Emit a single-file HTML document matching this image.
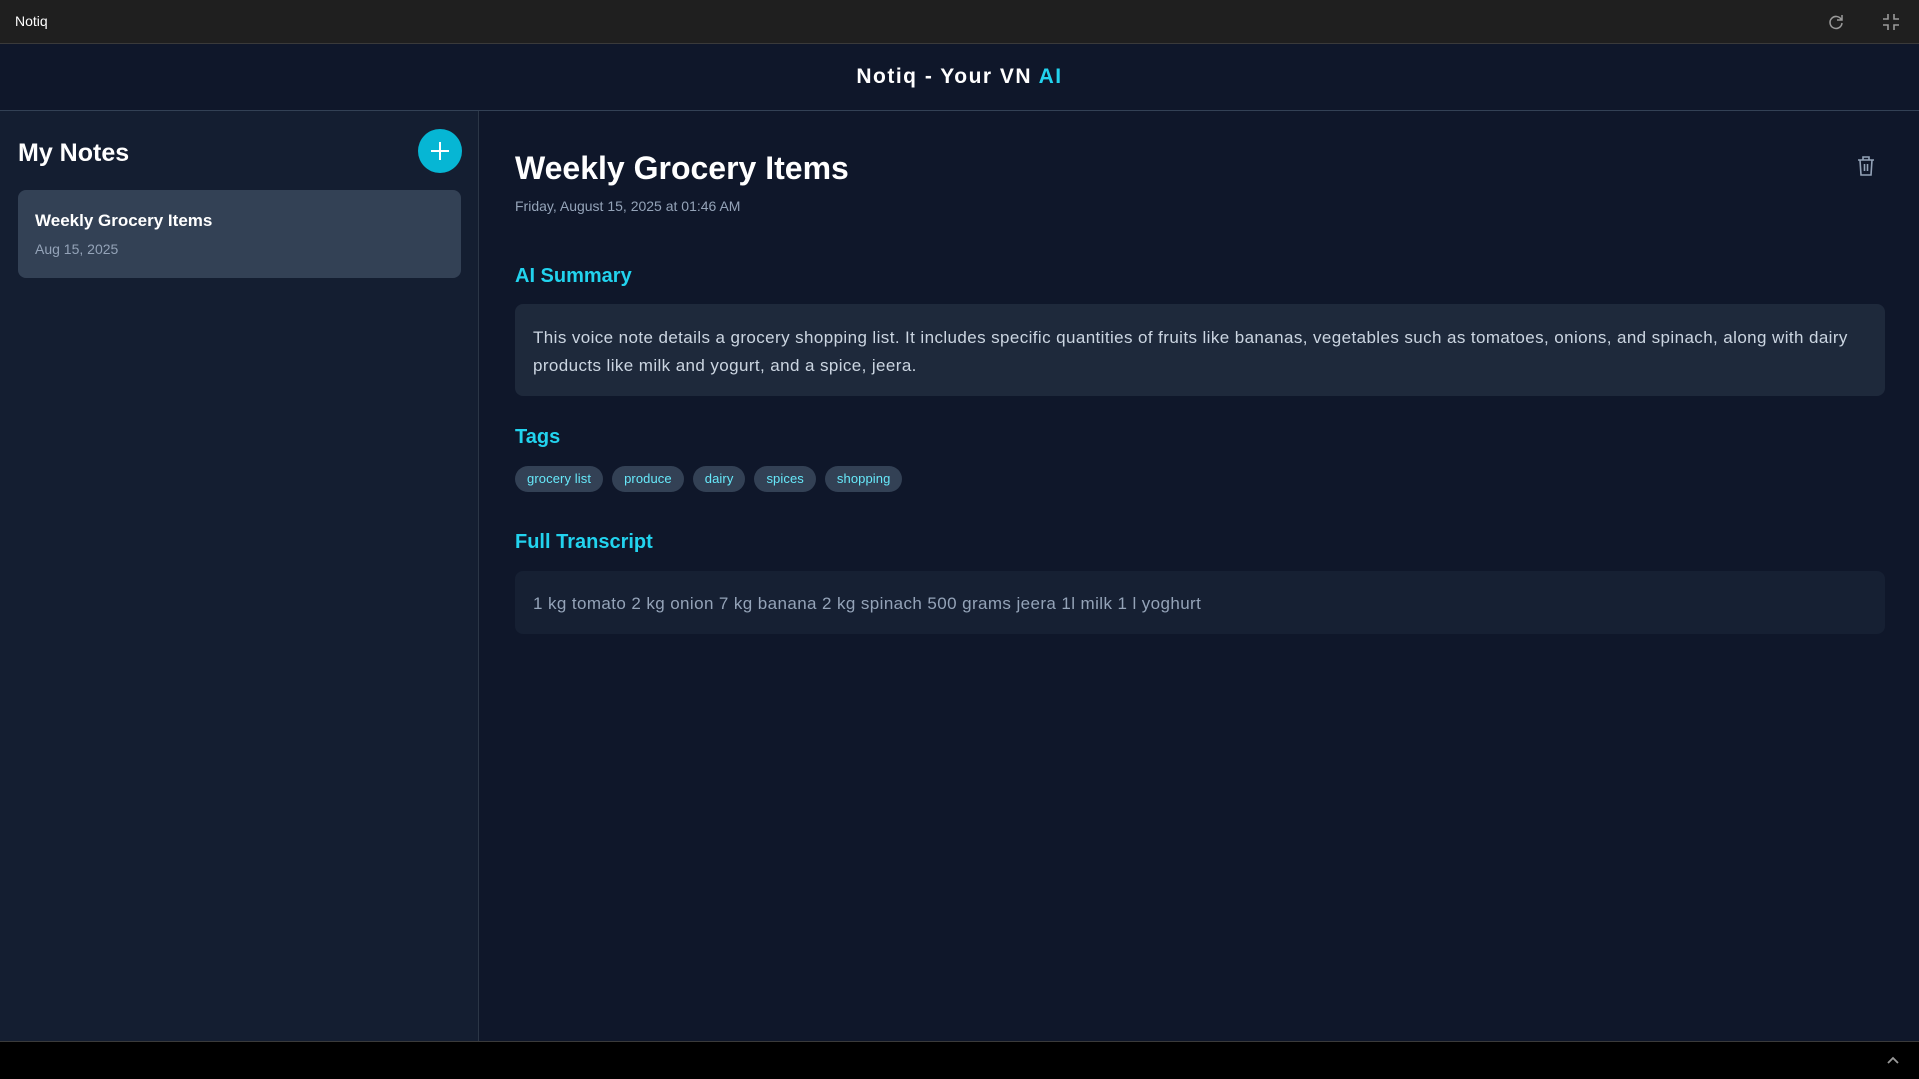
<!DOCTYPE html>
<html><head><meta charset="utf-8"><style>
*{margin:0;padding:0;box-sizing:border-box}
body{width:1919px;height:1079px;overflow:hidden;background:#0f172a;font-family:"Liberation Sans",sans-serif;position:relative;color:#fff}
.tb{position:absolute;left:0;top:0;width:1919px;height:44px;background:#1f1f1f;border-bottom:1px solid #3a3a3a}
.tb .n{position:absolute;left:15px;top:13px;font-size:14px;color:#fff}
.hd{position:absolute;left:0;top:44px;width:1919px;height:67px;background:#0f172a;border-bottom:1px solid #334155;text-align:center;line-height:66px;font-size:21px;font-weight:bold;letter-spacing:1.5px}
.hd span{color:#22d3ee}
.sb{position:absolute;left:0;top:111px;width:479px;height:930px;background:#141e31;border-right:1px solid #2b3646}
.sb h2{position:absolute;left:18px;top:28px;font-size:25px;font-weight:bold}
.plus{position:absolute;left:418px;top:18px;width:44px;height:44px;border-radius:50%;background:#06b6d4}
.card{position:absolute;left:18px;top:79px;width:443px;height:88px;background:#334155;border-radius:8px}
.card .t{position:absolute;left:17px;top:21px;font-size:17px;font-weight:bold}
.card .d{position:absolute;left:17px;top:51px;font-size:14px;color:#94a3b8}
.mn{position:absolute;left:515px;top:111px;width:1370px}
h1{position:absolute;left:0;top:39px;font-size:32px;font-weight:bold;white-space:nowrap}
.date{position:absolute;left:0;top:87px;font-size:14px;color:#94a3b8}
h3{position:absolute;left:0;font-size:20px;font-weight:bold;color:#22d3ee}
.box{position:absolute;left:0;width:1370px;border-radius:8px;padding:0 18px;font-size:17px;color:#cbd5e1;letter-spacing:0.4px;white-space:nowrap}
.tags{position:absolute;left:0;top:355px;display:flex;gap:9px}
.tag{height:26px;line-height:26px;padding:0 12px;border-radius:13px;background:#334155;color:#67e8f9;font-size:13px;letter-spacing:0.1px}
.bb{position:absolute;left:0;top:1041px;width:1919px;height:38px;background:#000;border-top:1px solid #3a3a3a}
</style></head><body>
<div class="tb"><div class="n">Notiq</div>
<svg style="position:absolute;left:1827px;top:13px" width="18" height="18" viewBox="0 0 18 18" fill="none" stroke="#9a9a9a" stroke-width="1.5"><path d="M14.5 7A6 6 0 1 0 15 10"/><path d="M15 2v5h-5"/></svg>
<svg style="position:absolute;left:1882px;top:13px" width="18" height="18" viewBox="0 0 18 18" fill="none" stroke="#9a9a9a" stroke-width="1.6"><path d="M6 1v5H1M12 1v5h5M6 17v-5H1M12 17v-5h5"/></svg>
</div>
<div class="hd">Notiq - Your VN <span>AI</span></div>
<div class="sb"><h2>My Notes</h2>
<div class="plus"><svg width="44" height="44" viewBox="0 0 44 44" stroke="#fff" stroke-width="2"><path d="M22 13v18M13 22h18"/></svg></div>
<div class="card"><div class="t">Weekly Grocery Items</div><div class="d">Aug 15, 2025</div></div>
</div>
<div class="mn">
<h1>Weekly Grocery Items</h1>
<div class="date">Friday, August 15, 2025 at 01:46 AM</div>
<svg style="position:absolute;left:1341px;top:44px" width="20" height="22" viewBox="0 0 20 22" fill="none" stroke="#94a3b8" stroke-width="1.6"><path d="M2 5h16M7 5V2h6v3M4 5l1 15h10l1-15M8.5 9v7M11.5 9v7"/></svg>
<h3 style="top:154px">AI Summary</h3>
<div class="box" style="top:193px;height:92px;background:#1e293b;padding-top:20px;line-height:28px">This voice note details a grocery shopping list. It includes specific quantities of fruits like bananas, vegetables such as tomatoes, onions, and spinach, along with dairy<br>products like milk and yogurt, and a spice, jeera.</div>
<h3 style="top:315px">Tags</h3>
<div class="tags"><div class="tag">grocery list</div><div class="tag">produce</div><div class="tag">dairy</div><div class="tag">spices</div><div class="tag">shopping</div></div>
<h3 style="top:420px">Full Transcript</h3>
<div class="box" style="top:460px;height:63px;background:#162033;line-height:66px;color:#94a3b8">1 kg tomato 2 kg onion 7 kg banana 2 kg spinach 500 grams jeera 1l milk 1 l yoghurt</div>
</div>
<div class="bb"><svg style="position:absolute;left:1886px;top:14px" width="14" height="9" viewBox="0 0 14 9" fill="none" stroke="#9a9a9a" stroke-width="1.8"><path d="M2 7l5-5 5 5"/></svg></div>
</body></html>
